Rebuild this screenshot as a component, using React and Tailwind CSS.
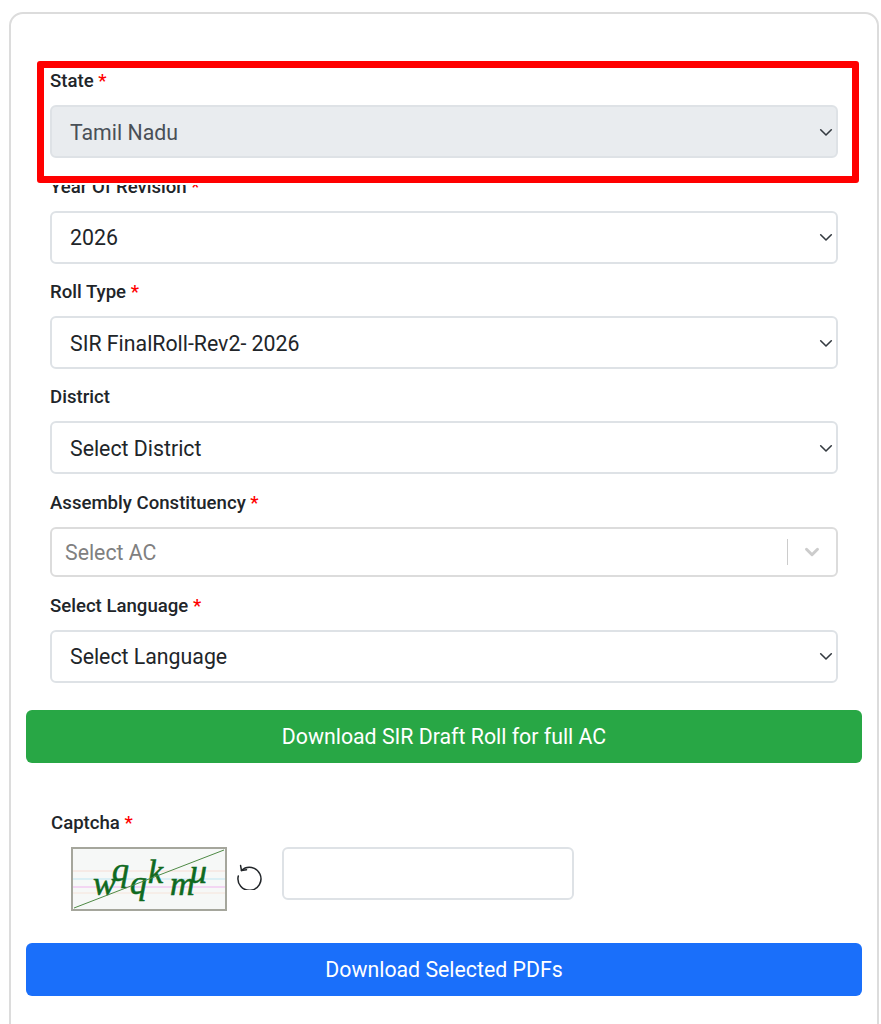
import React from 'react';
import { ChevronDown } from 'lucide-react';

const font = { fontFamily: 'Roboto, sans-serif' };

function Req() {
  return <span className="text-[#ff0000]"> *</span>;
}

function FieldLabel({ text, required }) {
  return (
    <label className="block h-[26px] mb-[11px] text-[18.6px] leading-[26px] font-medium text-[#212529]">
      {text}
      {required && <Req />}
    </label>
  );
}

function SelectBox({ value, disabled }) {
  return (
    <div
      className={`flex items-center justify-between h-[53px] pl-[18px] pr-[2px] rounded-[6px] border-2 border-[#dee2e6] text-[21.3px] ${
        disabled ? 'bg-[#e9ecef] text-[#495057]' : 'bg-white text-[#212529]'
      }`}
    >
      <span className="pt-[2px]">{value}</span>
      <svg width="16" height="16" viewBox="4 4 16 16" fill="none" stroke="#343a40" strokeWidth="1.6" strokeLinecap="round" strokeLinejoin="round">
        <path d="M6.7 9.8L12 15l5.3-5.2" />
      </svg>
    </div>
  );
}

function Captcha() {
  return (
    <div className="w-[156px] h-[64px] shrink-0 border-2 border-[#a5a69c] bg-[#f6f8f7]">
      <svg width="152" height="60" viewBox="0 0 152 60">
        <line x1="0" y1="22" x2="152" y2="22" stroke="#f6dcd4" />
        <line x1="0" y1="30" x2="152" y2="30" stroke="#bfe6f2" />
        <line x1="0" y1="38" x2="152" y2="38" stroke="#f0b4ee" />
        <line x1="0" y1="44" x2="152" y2="44" stroke="#f6e4da" />
        <text
          x="20 39 57 75 97 117"
          y="46 32 45 34 46 34"
          fill="#0f6a1f"
          stroke="#0f6a1f"
          strokeWidth="0.6"
          fontFamily="'Liberation Serif', serif"
          fontStyle="italic"
          fontSize="34"
        >
          wqqkmu
        </text>
        <line x1="1" y1="59" x2="151" y2="1" stroke="#4e8a45" strokeWidth="1" />
      </svg>
    </div>
  );
}

export default function App() {
  return (
    <div className="relative h-[1024px] overflow-hidden bg-white pt-3 pl-[9px]" style={font}>
      <div className="w-[870px] h-[1100px] rounded-[14px] border-2 border-[#dcdcdc] pt-[54px] px-[15px]">
        <div className="px-[24px] flex flex-col gap-[15.5px] w-[836px]">
          <div>
            <FieldLabel text="State" required />
            <SelectBox value="Tamil Nadu" disabled />
          </div>
          <div>
            <FieldLabel text="Year Of Revision" required />
            <SelectBox value="2026" />
          </div>
          <div>
            <FieldLabel text="Roll Type" required />
            <SelectBox value="SIR FinalRoll-Rev2- 2026" />
          </div>
          <div className="-mt-[0.2px]">
            <FieldLabel text="District" />
            <SelectBox value="Select District" />
          </div>
          <div className="mt-[0.2px]">
            <FieldLabel text="Assembly Constituency" required />
            <div className="flex items-center h-[50px] pl-[13px] rounded-[6px] border-2 border-[#dcdcdc] bg-white text-[21.3px] text-[#808080]">
              <span className="flex-1 pt-[1px]">Select AC</span>
              <span className="w-[1px] h-[26px] bg-[#cccccc]" />
              <span className="flex justify-center w-[48px] text-[#cccccc]">
                <ChevronDown size={22} strokeWidth={3.2} />
              </span>
            </div>
          </div>
          <div>
            <FieldLabel text="Select Language" required />
            <SelectBox value="Select Language" />
          </div>
        </div>

        <button className="block w-[836px] h-[53px] mt-[27px] pt-[1px] rounded-[6px] bg-[#28a745] text-white text-[21.3px]">
          Download SIR Draft Roll for full AC
        </button>

        <div className="mt-[47px] ml-[25px] h-[26px] text-[18.6px] leading-[26px] font-medium text-[#212529]">
          Captcha
          <Req />
        </div>
        <div className="flex items-start mt-[11px] ml-[45px]">
          <Captcha />
          <svg className="mt-[15px] ml-[9px]" width="28" height="28" viewBox="0 0 28 28" fill="none" stroke="#212529" strokeWidth="1.5" strokeLinecap="round" strokeLinejoin="round">
            <path d="M5.5 8.5A11.5 11.5 0 1 1 2.3 14" />
            <path d="M4.6 3.6l.9 5 5-.8" />
          </svg>
          <div className="w-[292px] h-[53px] ml-[18px] rounded-[6px] border-2 border-[#dee2e6] bg-white" />
        </div>

        <button className="block w-[836px] h-[53px] mt-[32px] pt-[1px] rounded-[6px] bg-[#1a6ffa] text-white text-[21.3px]">
          Download Selected PDFs
        </button>
      </div>

      {/* highlight drawn over the screenshot, it clips the label below it */}
      <div className="absolute left-[37px] top-[61px] w-[822px] h-[122px] rounded-[3px] border-[7px] border-[#ff0000] shadow-[0_2px_0_#ffffff]" />
    </div>
  );
}
